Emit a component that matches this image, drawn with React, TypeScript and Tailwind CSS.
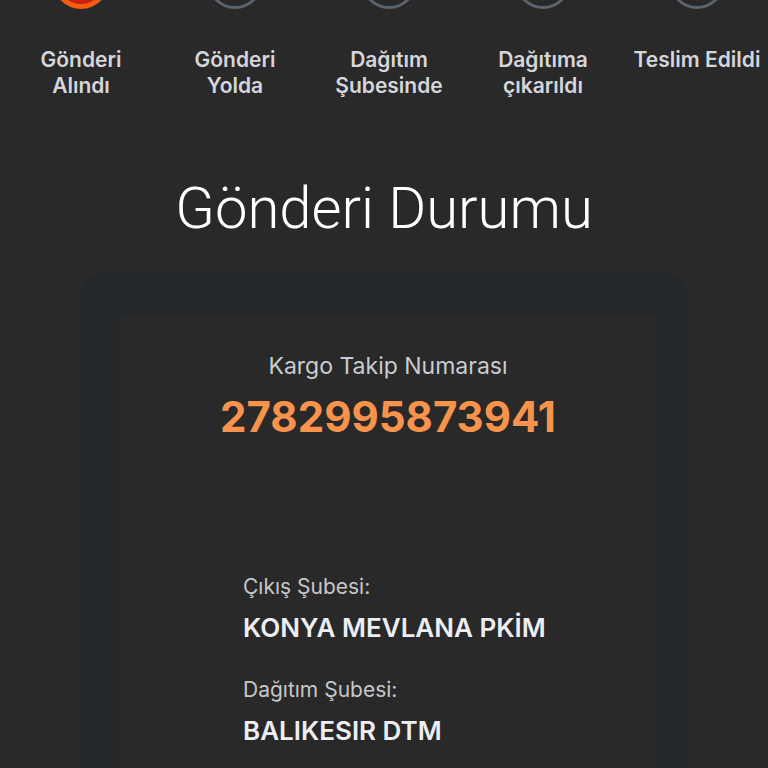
import React from "react";

const steps = [
  { title: "Gönderi", sub: "Alındı", done: true },
  { title: "Gönderi", sub: "Yolda", done: false },
  { title: "Dağıtım", sub: "Şubesinde", done: false },
  { title: "Dağıtıma", sub: "çıkarıldı", done: false },
  { title: "Teslim Edildi", sub: "", done: false },
];

function Step({ title, sub, done }: { title: string; sub: string; done: boolean }) {
  return (
    <div className="flex w-[154px] shrink-0 flex-col items-center">
      {done ? (
        <div className="-mt-[47px] h-14 w-14 rounded-full border-[5px] border-[#f25c13] bg-[#c7200c]" />
      ) : (
        <div className="-mt-[47px] h-14 w-14 rounded-full border-[3px] border-[#5c636d]" />
      )}
      <div className="mt-[38px] whitespace-nowrap text-center text-[21px] font-semibold leading-[26px] text-[#d4d6dc]">
        <div>{title}</div>
        {sub && <div>{sub}</div>}
      </div>
    </div>
  );
}

export default function App() {
  return (
    <div
      className="h-[768px] overflow-hidden bg-[#292929]"
      style={{ fontFamily: "Inter, 'Noto Sans', sans-serif" }}
    >
      <div className="flex pl-[4px]">
        {steps.map((s, i) => (
          <Step key={i} {...s} />
        ))}
      </div>

      <h1
        className="mt-[80px] text-center text-[58px] font-light leading-none text-white"
        style={{ fontFamily: "Roboto, sans-serif" }}
      >
        Gönderi Durumu
      </h1>

      <div className="mx-[80px] mt-[34px] rounded-[28px] bg-[#25282b] pl-[40px] pr-[32px] pt-[45px] pb-20">
        <div className="h-[600px] bg-[#292929] pt-[37px]">
          <div className="text-center text-[23px] leading-[26px] text-[#c9ccd2]">Kargo Takip Numarası</div>
          <div className="mt-[16px] text-center text-[42px] font-bold leading-[44px] text-[#f7934c]">
            2782995873941
          </div>

          <div className="mt-[134px] pl-[123px]">
            <div className="text-[21px] leading-[28px] text-[#c6c7ca]">Çıkış Şubesi:</div>
            <div className="mt-[12px] text-[26px] font-semibold leading-[30px] text-[#eceef3]">KONYA MEVLANA PKİM</div>
            <div className="mt-[33px] text-[21px] leading-[28px] text-[#c6c7ca]">Dağıtım Şubesi:</div>
            <div className="mt-[12px] text-[26px] font-semibold leading-[30px] text-[#eceef3]">BALIKESIR DTM</div>
          </div>
        </div>
      </div>
    </div>
  );
}
